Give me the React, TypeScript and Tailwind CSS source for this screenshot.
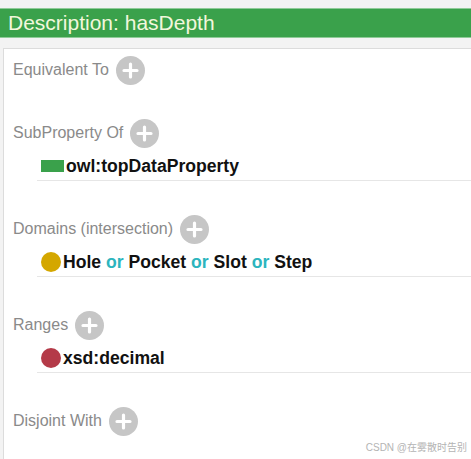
import { ReactNode } from "react"

type Item = { icon: ReactNode; text: ReactNode }

function PlusButton() {
  return (
    <span className="flex h-[29px] w-[29px] items-center justify-center rounded-full bg-[#c6c6c6]">
      <svg width="17" height="17" viewBox="0 0 17 17">
        <path d="M8.5 2v13M2 8.5h13" stroke="#fff" strokeWidth="3.2" strokeLinecap="round" />
      </svg>
    </span>
  )
}

function Section({ label, items = [] }: { label: string; items?: Item[] }) {
  return (
    <div className="pb-[33px]">
      <div className="flex h-[30px] items-center gap-[7px] pl-[9px]">
        <span className="text-[16px] text-[#8a8a8a]">{label}</span>
        <PlusButton />
      </div>
      {items.map((item, i) => (
        <div key={i} className="ml-[33px] mt-[4px] flex h-[29px] items-center gap-[2px] border-b border-[#e6e6e6] pl-[4px]">
          {item.icon}
          <span className="text-[17.6px] font-bold text-[#111]">{item.text}</span>
        </div>
      ))}
    </div>
  )
}

const Or = () => <span className="text-[#2cb5be]"> or </span>

export default function App() {
  return (
    <div className="relative flex h-[459px] w-[471px] flex-col overflow-hidden bg-[#f3f3f3] pt-[8px] font-['Liberation_Sans',Arial,sans-serif]">
      <div className="flex h-[30px] items-center border-y border-[#8fcb98] bg-[#3aa14b] pl-[8px] text-[21px] text-[#f2f7dc]">
        Description: hasDepth
      </div>
      <div className="mt-[10px] ml-[3px] flex-1 border-l border-t border-[#dcdcdc] bg-white pt-[6px]">
        <Section label="Equivalent To" />
        <Section
          label="SubProperty Of"
          items={[{ icon: <span className="h-[12px] w-[23px] bg-[#3aa14b]" />, text: "owl:topDataProperty" }]}
        />
        <Section
          label="Domains (intersection)"
          items={[
            {
              icon: <span className="h-[20px] w-[20px] rounded-full bg-[#d4a700]" />,
              text: (
                <>
                  Hole<Or />Pocket<Or />Slot<Or />Step
                </>
              ),
            },
          ]}
        />
        <Section
          label="Ranges"
          items={[{ icon: <span className="h-[20px] w-[20px] rounded-full bg-[#b43a48]" />, text: "xsd:decimal" }]}
        />
        <Section label="Disjoint With" />
      </div>
      <div className="absolute bottom-[4px] right-[4px] text-[10px] text-[#b4b4b4] font-['Liberation_Sans','Noto_Sans_CJK_SC',sans-serif]">
        CSDN @在雾散时告别
      </div>
    </div>
  )
}
